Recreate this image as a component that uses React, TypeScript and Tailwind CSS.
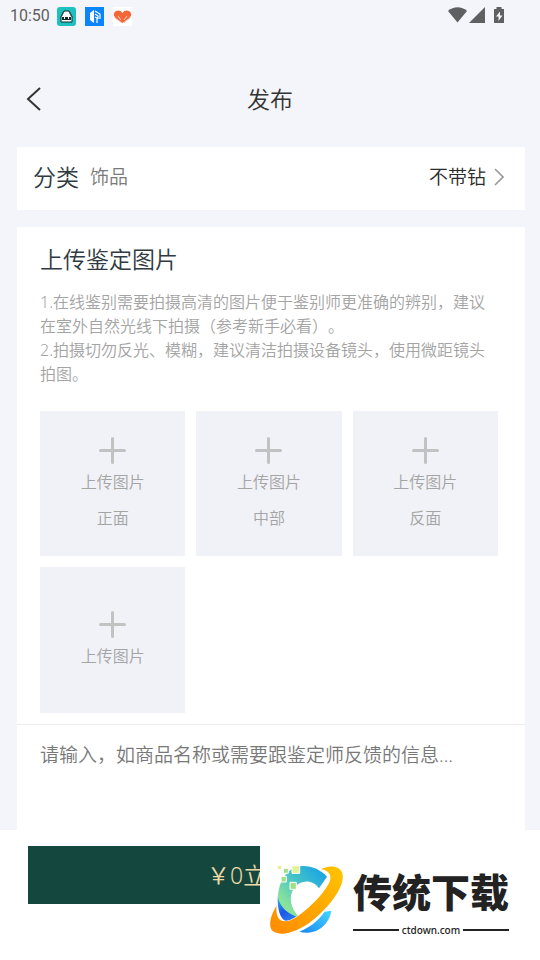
interface UploadSlot {
  id: string
  position?: string
}

const uploadSlots: UploadSlot[] = [
  { id: 'front', position: '正面' },
  { id: 'middle', position: '中部' },
  { id: 'back', position: '反面' },
  { id: 'extra' },
]

function StatusBar() {
  return (
    <div className="flex h-8 items-center pl-[10px] pr-[35px] text-[#5f6062]">
      <span className="font-['Roboto',sans-serif] text-[16px] font-normal leading-5">10:50</span>
      <svg className="ml-[7px] h-[19px] w-[19px]" viewBox="0 0 19 19" aria-hidden="true">
        <rect width="19" height="19" rx="3" fill="#1cc0c0" />
        <path d="M7 4h5v1h1v2h1v2h1v6H4V9h1V7h1V5h1z" fill="#fff" stroke="#14282b" />
        <path d="M5 10h9v3H5z" fill="#14282b" />
        <path d="M7 10h1v2H7zM11 10h1v2h-1z" fill="#fff" />
      </svg>
      <svg className="ml-[9px] h-[19px] w-[19px]" viewBox="0 0 19 19" aria-hidden="true">
        <rect width="19" height="19" fill="#0a84ff" />
        <path d="M9 3v13l-4-3V6z" fill="#fff" />
        <path d="M10 4l5 3v5M10 7l3 2v3M10 10l2 1v5" fill="none" stroke="#fff" strokeWidth="1.200" />
      </svg>
      <svg className="ml-[9px] h-[19px] w-[19px]" viewBox="0 0 19 19" aria-hidden="true">
        <rect width="19" height="19" rx="1" fill="#fff" />
        <path d="M9.500 6C8 3 5 3 3 4C0 6 0 9 3 12L9.500 16L16 12c3-3 3-6 0-8c-2-1-5-1-6.500 2z" fill="#f4673a" />
        <path d="M1 9c1 4 5 3 7 7M18 9c-1 4-5 3-7 7M5 9l3 4M14 9l-3 4" fill="none" stroke="#fbd9c8" strokeWidth="0.900" />
      </svg>
      <svg className="ml-auto h-[18px] w-[57px]" viewBox="0 0 57 18" fill="currentColor" aria-hidden="true">
        <path d="M0 4C5.500-1 13.500-1 19 4L9.500 15.500z" />
        <path d="M37 0v16H21z" />
        <path d="M48.500 0h5v2H56v14H46V2h2.500z" />
        <path d="M52 4.500l-4 5h2.500V14l4-5.500H52z" fill="#f4f5fa" />
      </svg>
    </div>
  )
}

function CategoryRow() {
  return (
    <section className="flex h-[63px] items-center bg-white pb-[3px] pl-4 pr-[21px]">
      <h2 className="text-[23px] font-[350] leading-8 text-[#2f3a42]">分类</h2>
      <span className="ml-[11px] text-[19px] leading-7 text-[#7a7a7a]">饰品</span>
      <button type="button" className="ml-auto flex items-center gap-2 text-[19px] leading-7 text-[#2b2b2b]">
        不带钻
        <svg className="h-[18px] w-[10px]" viewBox="0 0 10 18" fill="none" stroke="#999" strokeWidth="1.600" aria-hidden="true">
          <path d="M1 1l8 8-8 8" />
        </svg>
      </button>
    </section>
  )
}

function UploadTile({ position }: { position?: string }) {
  return (
    <button
      type="button"
      className="flex aspect-square flex-col items-center justify-center bg-[#f1f2f7] text-[16px] leading-6 text-[#a4a4a4]"
    >
      <svg className="h-[27px] w-[27px]" viewBox="0 0 27 27" stroke="#c2c2c2" strokeWidth="3" strokeLinecap="round" aria-hidden="true">
        <path d="M13.500 1.500v24M1.500 13.500h24" />
      </svg>
      <span className="mt-[6px]">上传图片</span>
      {position && <span className="mt-3">{position}</span>}
    </button>
  )
}

function SiteLogo() {
  return (
    <div className="flex items-start">
      <svg className="h-[74px] w-[76px] shrink-0" viewBox="27 36 228 222" aria-hidden="true">
        <defs>
          <linearGradient id="arc" x1="0" y1="1" x2="1" y2="0">
            <stop offset="0.200" stopColor="#8be39b" />
            <stop offset="0.550" stopColor="#43c3c8" />
            <stop offset="1" stopColor="#109ceb" />
          </linearGradient>
          <linearGradient id="ring" x1="0" y1="1" x2="1" y2="0">
            <stop offset="0" stopColor="#ff8a00" />
            <stop offset="1" stopColor="#ffc400" />
          </linearGradient>
          <linearGradient id="tail" x1="0" y1="1" x2="1" y2="0">
            <stop offset="0" stopColor="#1b86ee" />
            <stop offset="1" stopColor="#43d7ff" />
          </linearGradient>
          <linearGradient id="deep" x1="0" y1="0" x2="0.500" y2="1">
            <stop offset="0" stopColor="#28bdf5" />
            <stop offset="0.600" stopColor="#1c55e8" />
            <stop offset="1" stopColor="#2b7cf2" />
          </linearGradient>
        </defs>
        <path d="M53 138C52 175 58 207 82 216C95 217 108 210 119 202C88 190 65 170 53 138z" fill="url(#deep)" />
        <path d="M119 49C150 45 181 58 201 80L177 115C158 87 122 89 103 113C84 138 91 177 119 202C85 195 58 170 54 140C56 93 82 56 119 49z" fill="url(#arc)" />
        <path d="M214 182C207 228 164 258 118 245C149 232 174 213 194 185z" fill="url(#tail)" />
        <path
          d="M183 57C209 44 238 48 246 67C260 104 210 168 158 211C116 245 65 262 39 244C23 231 31 196 50 167C46 202 59 222 91 211C126 197 185 141 207 100C218 77 207 61 183 57z"
          fill="url(#ring)"
          stroke="#fff"
          strokeWidth="4"
          paintOrder="stroke"
        />
        <g stroke="#fff" strokeWidth="3">
          <path d="M52 46h13v13H52zM96 47h23v23H96z" fill="#e0f294" />
          <path d="M70 55h15v15H70zM63 79h16v17H63zM90 97h19v21H90z" fill="#a4dd87" />
        </g>
      </svg>
      <div className="ml-2 w-[156px]">
        <p className="whitespace-nowrap text-[39px] font-black leading-[60px] text-[#222]">传统下载</p>
        <div className="flex items-center gap-[3px] text-[10px] font-medium leading-4 text-[#222]">
          <span className="h-[2px] flex-1 bg-[#222]" />
          ctdown.com
          <span className="h-[2px] flex-1 bg-[#222]" />
        </div>
      </div>
    </div>
  )
}

export default function App() {
  return (
    <div
      lang="zh-CN"
      className="flex min-h-screen flex-col bg-[#f4f5fa] font-['Noto_Sans','Noto_Sans_CJK_SC',sans-serif] font-[350] [text-spacing-trim:space-all]"
    >
      <StatusBar />
      <header className="grid h-[115px] grid-cols-3 items-center pb-0 pt-[18px]">
        <button type="button" aria-label="返回" className="ml-[26px] h-6 w-6">
          <svg className="h-6 w-4" viewBox="0 0 16 24" fill="none" stroke="#333" strokeWidth="2" aria-hidden="true">
            <path d="M14 1L2 12l12 11" />
          </svg>
        </button>
        <h1 className="text-center text-[23px] font-[350] leading-8 text-[#333]">发布</h1>
      </header>

      <main className="flex flex-1 flex-col gap-[17px] pl-[17px] pr-[15px]">
        <CategoryRow />
        <section className="flex flex-1 flex-col bg-white pt-4">
          <div className="pb-[11px] pl-[23px] pr-[27px]">
            <h2 className="text-[23px] font-[350] leading-8 text-[#2f3a42]">上传鉴定图片</h2>
            <div className="mb-[25px] mt-[15px] text-[16px] leading-6 text-[#a4a4a4]">
              <p>1.在线鉴别需要拍摄高清的图片便于鉴别师更准确的辨别，建议在室外自然光线下拍摄（参考新手必看）。</p>
              <p>2.拍摄切勿反光、模糊，建议清洁拍摄设备镜头，使用微距镜头拍图。</p>
            </div>
            <div className="grid grid-cols-3 gap-[11px]">
              {uploadSlots.map((slot) => (
                <UploadTile key={slot.id} position={slot.position} />
              ))}
            </div>
          </div>
          <textarea
            aria-label="商品信息"
            placeholder="请输入，如商品名称或需要跟鉴定师反馈的信息..."
            className="w-full flex-1 resize-none border-t border-[#ececec] px-[23px] pt-4 text-[19px] leading-7 text-[#333] outline-none placeholder:text-[#787878]"
          />
        </section>
      </main>

      <footer className="flex h-[130px] items-start bg-white pl-7 pr-[31px] pt-4">
        <button
          type="button"
          className="h-[58px] min-w-0 flex-1 overflow-hidden whitespace-nowrap bg-[#14483f] pl-[179px] text-left text-[23px] text-[#f0d9a4]"
        >
          ￥0立
        </button>
        <div className="ml-[9px] mt-4">
          <SiteLogo />
        </div>
      </footer>
    </div>
  )
}
